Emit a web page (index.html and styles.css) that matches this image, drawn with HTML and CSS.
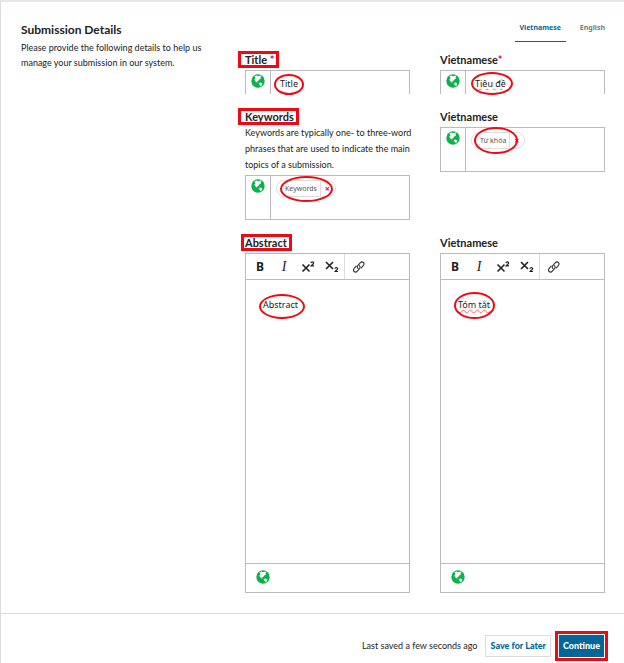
FILE: index.html
```html
<!DOCTYPE html>
<html lang="en">
<head>
    <meta charset="UTF-8">
    <meta name="viewport" content="width=device-width, initial-scale=1.0">
    <title>Submission Details</title>
    <link rel="stylesheet" href="styles.css">
</head>
<body>
    <!-- Shared icons -->
    <svg class="sprite" aria-hidden="true">
        <symbol id="globe" viewBox="0 0 14 14">
            <circle cx="7" cy="7" r="6.7" fill="#0cb14b"/>
            <path d="M3.4 2.2 5.6 1.5 7.2 2.3 9.6 1.6 10.4 2.6 9.4 3.8 9.9 4.8 8.2 5.6 7.3 7.1 6 7.4 6.6 8.6 5.4 8.2 4 7 3.4 5.2 4.6 4.3Z" fill="#fff"/>
            <path d="M7.6 9.2 9.4 8.6 11.3 9.6 10.9 11.2 9.5 12.3 8.8 10.9Z" fill="#fff"/>
        </symbol>
        <symbol id="link" viewBox="0 0 14 14">
            <g fill="none" stroke="#333" stroke-width="1.1" stroke-linecap="round">
                <path d="M6 7.4C5 6.4 5.2 5.2 6 4.3L8.2 1.8C9.1 .8 10.5 .7 11.4 1.5S12.2 3.7 11.3 4.7L9.3 6.9"/>
                <path d="M7.5 4.6C8.5 5.6 8.3 6.8 7.5 7.7L5.3 10.2C4.4 11.2 3 11.3 2.1 10.5S1.3 8.3 2.2 7.3L4.2 5.1"/>
            </g>
        </symbol>
        <symbol id="super" viewBox="0 0 14 14">
            <path d="M1.5 3.5 8.5 10.5M8.5 3.5 1.5 10.5" fill="none" stroke="#222" stroke-width="1.6"/>
            <path d="M9.9 2C10.2 .6 12.7 .6 12.6 2.1 12.5 3.1 10.8 3.8 10.1 4.9H13" fill="none" stroke="#222" stroke-width="1.2"/>
        </symbol>
        <symbol id="sub" viewBox="0 0 14 14">
            <path d="M1 1 8 8M8 1 1 8" fill="none" stroke="#222" stroke-width="1.6"/>
            <path d="M9.9 7.6C10.2 6.2 12.7 6.2 12.6 7.7 12.5 8.7 10.8 9.4 10.1 10.5H13" fill="none" stroke="#222" stroke-width="1.2"/>
        </symbol>
    </svg>

    <main class="panel">
        <form class="step">
            <div class="step-intro">
                <h2 class="step-title">Submission Details</h2>
                <p class="step-text">Please provide the following details to help us manage your submission in our system.</p>
            </div>

            <div class="step-fields">
                <div class="locales">
                    <button type="button" class="locale active">Vietnamese</button>
                    <button type="button" class="locale">English</button>
                </div>

                <!-- Title -->
                <div class="row">
                    <div class="field">
                        <label class="label" for="title-en"><span class="box">Title <span class="required">*</span></span></label>
                        <div class="control open">
                            <span class="flag"><svg class="globe"><use href="#globe"/></svg></span>
                            <div class="value">
                                <input class="text" id="title-en" type="text" value="Title">
                                <span class="ring ring-title"></span>
                            </div>
                        </div>
                    </div>
                    <div class="field">
                        <label class="label" for="title-vi">Vietnamese<span class="required">*</span></label>
                        <div class="control open">
                            <span class="flag"><svg class="globe"><use href="#globe"/></svg></span>
                            <div class="value">
                                <input class="text misspelled" id="title-vi" type="text" value="Tiêu đề">
                                <span class="ring ring-title-vi"></span>
                            </div>
                        </div>
                    </div>
                </div>

                <!-- Keywords -->
                <div class="row">
                    <div class="field">
                        <label class="label" for="keywords-en"><span class="box">Keywords</span></label>
                        <p class="help">Keywords are typically one- to three-word phrases that are used to indicate the main topics of a submission.</p>
                        <div class="control tall">
                            <span class="flag"><svg class="globe"><use href="#globe"/></svg></span>
                            <div class="value tags">
                                <span class="tag">Keywords <button type="button" class="remove" aria-label="Remove Keywords">×</button></span>
                                <input class="tag-input" id="keywords-en" type="text">
                                <span class="ring ring-tag"></span>
                            </div>
                        </div>
                    </div>
                    <div class="field">
                        <label class="label" for="keywords-vi">Vietnamese</label>
                        <div class="control tall">
                            <span class="flag"><svg class="globe"><use href="#globe"/></svg></span>
                            <div class="value tags">
                                <span class="tag">Từ khóa <button type="button" class="remove" aria-label="Remove Từ khóa">×</button></span>
                                <input class="tag-input" id="keywords-vi" type="text">
                                <span class="ring ring-tag-vi"></span>
                            </div>
                        </div>
                    </div>
                </div>

                <!-- Abstract -->
                <div class="row">
                    <div class="field">
                        <label class="label" for="abstract-en"><span class="box box-tight">Abstract</span></label>
                        <div class="editor">
                            <div class="toolbar">
                                <button type="button" class="tool bold">B</button>
                                <button type="button" class="tool italic">I</button>
                                <button type="button" class="tool" aria-label="Superscript"><svg class="icon"><use href="#super"/></svg></button>
                                <button type="button" class="tool" aria-label="Subscript"><svg class="icon"><use href="#sub"/></svg></button>
                                <button type="button" class="tool tool-link" aria-label="Link"><svg class="icon"><use href="#link"/></svg></button>
                            </div>
                            <div class="editor-body">
                                <textarea class="content" id="abstract-en">Abstract</textarea>
                                <span class="ring ring-abstract"></span>
                            </div>
                            <div class="editor-foot"><svg class="globe"><use href="#globe"/></svg></div>
                        </div>
                    </div>
                    <div class="field">
                        <label class="label" for="abstract-vi">Vietnamese</label>
                        <div class="editor">
                            <div class="toolbar">
                                <button type="button" class="tool bold">B</button>
                                <button type="button" class="tool italic">I</button>
                                <button type="button" class="tool" aria-label="Superscript"><svg class="icon"><use href="#super"/></svg></button>
                                <button type="button" class="tool" aria-label="Subscript"><svg class="icon"><use href="#sub"/></svg></button>
                                <button type="button" class="tool tool-link" aria-label="Link"><svg class="icon"><use href="#link"/></svg></button>
                            </div>
                            <div class="editor-body">
                                <textarea class="content misspelled" id="abstract-vi">Tóm tắt</textarea>
                                <span class="ring ring-abstract-vi"></span>
                            </div>
                            <div class="editor-foot"><svg class="globe"><use href="#globe"/></svg></div>
                        </div>
                    </div>
                </div>
            </div>
        </form>

        <footer class="actions">
            <span class="saved">Last saved a few seconds ago</span>
            <button type="button" class="button">Save for Later</button>
            <button type="button" class="button primary">Continue</button>
        </footer>
    </main>
</body>
</html>
```
FILE: styles.css
```css
* {
    box-sizing: border-box;
}

body {
    margin: 0;
    background: #fff;
    color: #222;
    font-family: Lato, "Noto Sans", sans-serif;
    font-size: 9px;
    line-height: 16px;
}

button, input, textarea {
    font: inherit;
    color: inherit;
}

button {
    padding: 0;
    border: none;
    background: none;
    cursor: pointer;
}

.sprite {
    position: absolute;
    width: 0;
    height: 0;
}

.panel {
    border-top: 2px solid #e4e8e8;
    border-left: 1px solid #ddd;
}

/* Form */
.step {
    display: grid;
    grid-template-columns: 200px minmax(0, 1fr);
    gap: 24px;
    padding: 16px 19px 20px 20px;
}

.step-intro {
    padding-top: 4px;
}

.step-title {
    margin: 0;
    font-size: 12px;
    line-height: 16px;
}

.step-text {
    margin: 2px 0 0;
    line-height: 15px;
}

.step-fields {
    display: flex;
    flex-direction: column;
    gap: 15px;
}

.locales {
    display: flex;
    justify-content: flex-end;
    gap: 14px;
    margin-bottom: -5px;
}

.locale {
    height: 24px;
    padding-bottom: 4px;
    font-family: "Noto Sans", sans-serif;
    font-size: 7px;
    font-weight: bold;
    color: #777;
}

.locale.active {
    padding: 0 5px 4px;
    color: #006798;
    border-bottom: 1px solid #006798;
}

.row {
    display: grid;
    grid-template-columns: minmax(0, 1fr) minmax(0, 1fr);
    gap: 30px;
    align-items: start;
}

.label {
    display: block;
    margin-bottom: 2px;
    font-size: 11px;
    font-weight: bold;
    line-height: 16px;
}

.required {
    color: #d00a6c;
}

.help {
    margin: 0 -8px 2px 0;
}

.label:has(+ .help) {
    margin-bottom: 0;
}

.control {
    display: flex;
    height: 24px;
    border: 1px solid #bbb;
}

.control.open {
    border-bottom: none;
}

.control.tall {
    height: 45px;
}

.flag {
    width: 25px;
    padding-top: 3px;
    border-right: 1px solid #bbb;
    text-align: center;
    line-height: 0;
}

.globe {
    width: 14px;
    height: 14px;
}

.value {
    position: relative;
    flex: 1;
    min-width: 0;
    font-family: "Noto Sans", sans-serif;
}

.text {
    display: block;
    width: 100%;
    height: 24px;
    padding: 0 9px;
    border: none;
    outline: none;
    background: none;
}

.misspelled {
    text-decoration: underline wavy #f66 1px;
}

/* Keyword tags */
.tags {
    display: flex;
    align-items: flex-start;
    padding: 4px 5px;
}

.tag {
    display: flex;
    height: 17px;
    padding: 0 5px 0 8px;
    border: 1px solid #ddd;
    border-radius: 9px;
    font-size: 7px;
    line-height: 15px;
    color: #555;
}

.remove {
    margin-left: 3px;
    padding-left: 4px;
    border-left: 1px solid #ddd;
    font-size: 9px;
    font-weight: bold;
    line-height: 13px;
    color: #d00a6c;
}

.tag-input {
    flex: 1;
    min-width: 0;
    border: none;
    outline: none;
    background: none;
}

/* Editor */
.editor {
    border: 1px solid #bbb;
    font-family: "Noto Sans", sans-serif;
}

.toolbar {
    display: flex;
    height: 26px;
    padding-left: 2px;
    border-bottom: 1px solid #bbb;
}

.tool {
    width: 24px;
    font-size: 14px;
    line-height: 24px;
}

.bold {
    font-size: 12px;
    font-weight: bold;
}

.italic {
    font-family: "Liberation Serif", serif;
    font-style: italic;
}

.tool-link {
    width: 28px;
    border-left: 1px solid #ddd;
}

.icon {
    width: 14px;
    height: 14px;
    vertical-align: middle;
}

.editor-body {
    position: relative;
}

.content {
    display: block;
    width: 100%;
    height: 283px;
    padding: 17px;
    border: none;
    outline: none;
    resize: none;
    background: none;
}

.editor-foot {
    height: 29px;
    padding: 6px 10px;
    border-top: 1px solid #bbb;
    line-height: 0;
}

/* Footer */
.actions {
    display: flex;
    justify-content: flex-end;
    align-items: center;
    gap: 8px;
    padding: 21px 20px 6px;
    border-top: 1px solid #ddd;
}

.button {
    height: 22px;
    padding: 0 4px;
    border: 1px solid #ddd;
    font-weight: 900;
    color: #006798;
}

.primary {
    padding: 0 3px;
    border-color: #006798;
    background: #006798;
    color: #fff;
    outline: 3px solid #ee0a14;
    outline-offset: 1px;
}

/* Red highlights */
.box {
    position: relative;
}

.box::after {
    content: "";
    position: absolute;
    inset: -2px -5px -2px -7px;
    border: 3px solid #ee0a14;
}

.box-tight::after {
    left: -4px;
}

.ring {
    position: absolute;
    border: 2px solid #ee0a14;
    border-radius: 50%;
    pointer-events: none;
}

.ring-title {
    left: 3px;
    top: 3px;
    width: 30px;
    height: 21px;
}

.ring-title-vi {
    left: 5px;
    top: 1px;
    width: 42px;
    height: 23px;
}

.ring-tag {
    left: 9px;
    top: 0;
    width: 53px;
    height: 26px;
}

.ring-tag-vi {
    left: 8px;
    top: -1px;
    width: 44px;
    height: 27px;
}

.ring-abstract {
    left: 13px;
    top: 14px;
    width: 46px;
    height: 25px;
}

.ring-abstract-vi {
    left: 13px;
    top: 12px;
    width: 41px;
    height: 27px;
}
```
